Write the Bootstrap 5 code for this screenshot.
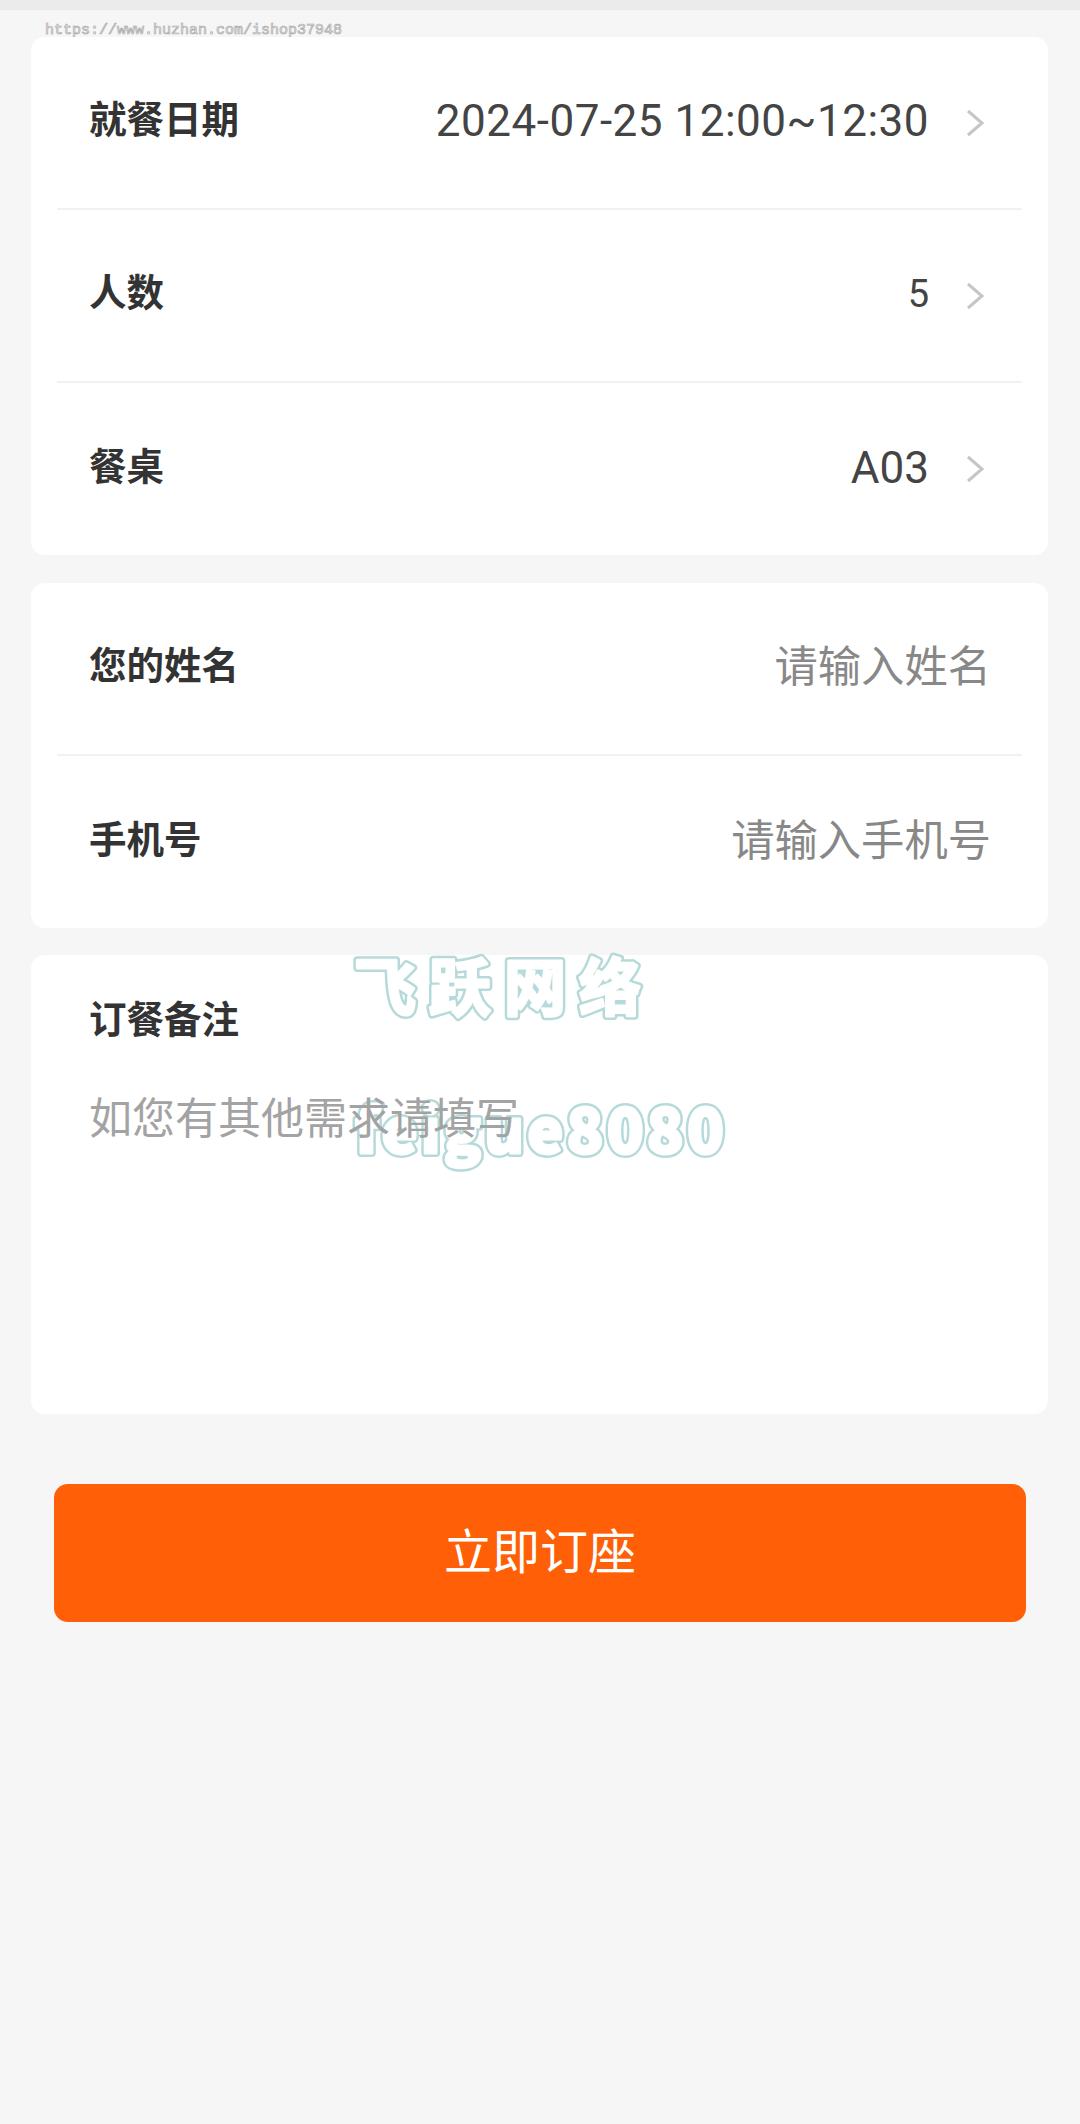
<!DOCTYPE html>
<html lang="zh-CN">
<head>
  <meta charset="UTF-8">
  <title>立即订座</title>
  <link href="https://cdn.jsdelivr.net/npm/bootstrap@5.3.0/dist/css/bootstrap.min.css" rel="stylesheet">
  <style>
    html, body { height: 100%; }
    body {
      background: #f6f6f6;
      font-family: Roboto, "Noto Sans CJK SC", sans-serif;
      position: relative;
      overflow: hidden;
    }
    .top-strip { height: 10px; background: #ebebeb; }
    .page-wrap { padding: 27px 32px 0 31px; position: relative; }
    .form-panel {
      background: #fff;
      border-radius: 14px;
      margin-bottom: 27px;
      padding: 0 26px;
      position: relative;
    }
    .form-panel:first-child { margin-bottom: 28px; }
    .form-row {
      height: 173px;
      padding: 0 0 5px 32px;
      border-bottom: 2px solid #f1f1f1;
    }
    .form-row:last-child { height: 172px; border-bottom: 0; }
    .field-label {
      font-family: "Noto Sans CJK SC", sans-serif;
      font-size: 37.5px;
      font-weight: 700;
      color: #333;
    }
    .form-row .field-label, .form-row .field-ph { padding-bottom: 5px; }
    .value-wrap { padding-top: 2px; }
    .field-value {
      font-size: 44px;
      color: #444;
      line-height: 1;
    }
    .field-value.date-val { letter-spacing: .5px; }
    .field-value.small-val { font-size: 38px; }
    .field-ph {
      font-family: "Noto Sans CJK SC", sans-serif;
      font-size: 43.3px;
      color: #888;
      padding-right: 31px;
    }
    .chev { width: 18px; height: 28px; margin: 3px 38px 0 37px; flex: none; }
    .note-panel { height: 459px; padding: 34px 26px 0 58px; margin-bottom: 70px; }
    .note-panel .field-label, .note-ph { position: relative; z-index: 1; }
    .note-ph {
      font-family: "Noto Sans CJK SC", sans-serif;
      font-size: 43px;
      color: #a3a3a3;
      margin-top: 38px;
    }
    .order-btn {
      display: block;
      width: 972px;
      height: 138px;
      margin-left: 23px;
      padding: 0 0 10px;
      background: #ff5f06;
      border: 0;
      border-radius: 14px;
      color: #fff;
      font-family: "Noto Sans CJK SC", sans-serif;
      font-size: 48px;
    }
    .order-btn:hover, .order-btn:active { background: #ff5f06 !important; color: #fff !important; }
    .mark-url {
      position: absolute;
      left: 45px;
      top: 20px;
      font-family: "Liberation Mono", monospace;
      font-size: 15px;
      color: #f6f6f6;
      -webkit-text-stroke: .7px #a8a8a8;
      white-space: nowrap;
    }
    /* watermark sits on the card, behind the note text */
    .mark-art {
      position: absolute;
      left: 309px;
      top: -15px;
      width: 400px;
      height: 240px;
      overflow: visible;
      pointer-events: none;
    }
    .mark-art text {
      font-family: "Noto Sans CJK SC", sans-serif;
      stroke-linejoin: round;
      stroke-linecap: round;
    }
    .mark-cn { font-weight: 700; }
    .mark-en { font-weight: 900; }
    .ring-out { stroke: #b5dad9; stroke-width: 8px; fill: #b5dad9; }
    .ring-in { stroke: #fff; stroke-width: 3px; fill: #fff; }
  </style>
</head>
<body>
  <div class="top-strip"></div>
  <div class="mark-url">https://www.huzhan.com/ishop37948</div>

  <div class="page-wrap">
    <div class="form-panel">
      <div class="form-row d-flex align-items-center justify-content-between">
        <span class="field-label">就餐日期</span>
        <span class="value-wrap d-flex align-items-center">
          <span class="field-value date-val">2024-07-25 12:00~12:30</span>
          <svg class="chev" viewBox="0 0 18 28"><path d="M2 2l14 12L2 26" fill="none" stroke="#c6c6c6" stroke-width="3"/></svg>
        </span>
      </div>
      <div class="form-row d-flex align-items-center justify-content-between">
        <span class="field-label">人数</span>
        <span class="value-wrap d-flex align-items-center">
          <span class="field-value small-val">5</span>
          <svg class="chev" viewBox="0 0 18 28"><path d="M2 2l14 12L2 26" fill="none" stroke="#c6c6c6" stroke-width="3"/></svg>
        </span>
      </div>
      <div class="form-row d-flex align-items-center justify-content-between">
        <span class="field-label">餐桌</span>
        <span class="value-wrap d-flex align-items-center">
          <span class="field-value">A03</span>
          <svg class="chev" viewBox="0 0 18 28"><path d="M2 2l14 12L2 26" fill="none" stroke="#c6c6c6" stroke-width="3"/></svg>
        </span>
      </div>
    </div>

    <div class="form-panel">
      <div class="form-row d-flex align-items-center justify-content-between">
        <span class="field-label">您的姓名</span>
        <span class="field-ph">请输入姓名</span>
      </div>
      <div class="form-row d-flex align-items-center justify-content-between">
        <span class="field-label">手机号</span>
        <span class="field-ph">请输入手机号</span>
      </div>
    </div>

    <div class="form-panel note-panel">
      <svg class="mark-art" viewBox="0 0 400 240">
        <defs>
          <g id="markText">
            <text class="mark-cn" x="14" y="71" font-size="62" letter-spacing="13">飞跃网络</text>
            <text class="mark-en" x="15" y="213" font-size="60" letter-spacing="3.6">feigue8080</text>
          </g>
        </defs>
        <use href="#markText" class="ring-out"/>
        <use href="#markText" class="ring-in"/>
      </svg>
      <div class="field-label">订餐备注</div>
      <div class="note-ph">如您有其他需求请填写</div>
    </div>

    <button type="button" class="btn order-btn">立即订座</button>
  </div>

  <script src="https://cdn.jsdelivr.net/npm/bootstrap@5.3.0/dist/js/bootstrap.bundle.min.js"></script>
</body>
</html>
